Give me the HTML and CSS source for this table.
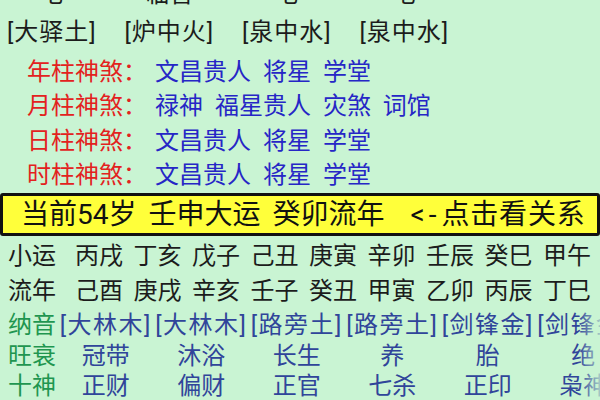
FILE: index.html
```html
<!DOCTYPE html>
<html lang="zh-CN">
<head>
<meta charset="utf-8">
<title>八字排盘</title>
<link rel="stylesheet" href="styles.css">
</head>
<body>
<div class="page">
  <div class="grid4 cut">
    <span>宅</span><span>临官</span><span>宅</span><span>宅</span>
  </div>
  <div class="grid4 nayin">
    <span>[大驿土]</span><span>[炉中火]</span><span>[泉中水]</span><span>[泉中水]</span>
  </div>
  <div class="shensha">
    <div class="ss-row"><span class="ss-label">年柱神煞：</span><span class="ss-val">文昌贵人 将星 学堂</span></div>
    <div class="ss-row"><span class="ss-label">月柱神煞：</span><span class="ss-val">禄神 福星贵人 灾煞 词馆</span></div>
    <div class="ss-row"><span class="ss-label">日柱神煞：</span><span class="ss-val">文昌贵人 将星 学堂</span></div>
    <div class="ss-row"><span class="ss-label">时柱神煞：</span><span class="ss-val">文昌贵人 将星 学堂</span></div>
  </div>
  <div class="bar">
    <span>当前54岁</span><span>壬申大运</span><span>癸卯流年</span><span class="link"><span class="arrow">&lt;-</span><span class="act">点击看关系</span></span>
  </div>
  <div class="yun">
    <div class="yun-row"><span class="yl">小运</span><span>丙戌</span><span>丁亥</span><span>戊子</span><span>己丑</span><span>庚寅</span><span>辛卯</span><span>壬辰</span><span>癸巳</span><span>甲午</span></div>
    <div class="yun-row"><span class="yl">流年</span><span>己酉</span><span>庚戌</span><span>辛亥</span><span>壬子</span><span>癸丑</span><span>甲寅</span><span>乙卯</span><span>丙辰</span><span>丁巳</span></div>
  </div>
  <div class="table">
    <div class="t-row r-nayin"><span class="gl">纳音</span><span class="cell">[大林木]</span><span class="cell">[大林木]</span><span class="cell">[路旁土]</span><span class="cell">[路旁土]</span><span class="cell">[剑锋金]</span><span class="cell">[剑锋金]</span></div>
    <div class="t-row"><span class="gl">旺衰</span><span class="cell">冠带</span><span class="cell">沐浴</span><span class="cell">长生</span><span class="cell">养</span><span class="cell">胎</span><span class="cell">绝</span></div>
    <div class="t-row"><span class="gl">十神</span><span class="cell">正财</span><span class="cell">偏财</span><span class="cell">正官</span><span class="cell">七杀</span><span class="cell">正印</span><span class="cell">枭神</span></div>
    <div class="fade"></div>
  </div>
</div>
</body>
</html>
```

FILE: styles.css
```css
html, body {
  margin: 0;
  padding: 0;
  background: #c9f4d3;
}
body {
  width: 600px;
  height: 400px;
  overflow: hidden;
  font-family: Roboto, "Noto Sans CJK SC", sans-serif;
  font-size: 24px;
  color: #1c1c1c;
}
.page {
  width: 600px;
}
.grid4 {
  display: grid;
  grid-template-columns: repeat(4, 117.5px);
  margin-left: -7px;
  height: 34px;
  line-height: 34px;
  text-align: center;
  white-space: nowrap;
}
.cut {
  margin-top: -23px;
}
.nayin {
  margin-top: 4px;
  letter-spacing: 1px;
}
.shensha {
  padding-top: 6px;
}
.ss-row {
  display: flex;
  gap: 8px;
  height: 34.3px;
  line-height: 34.3px;
  padding-left: 27px;
  white-space: nowrap;
}
.ss-label {
  color: #e3221e;
}
.ss-val {
  color: #2626c6;
  word-spacing: 6px;
}
.bar {
  margin-top: 1px;
  height: 37px;
  line-height: 37px;
  border: 3px solid #111;
  border-radius: 3px;
  background: #ffff3a;
  display: flex;
  gap: 12px;
  padding-left: 18px;
  font-size: 28px;
  color: #111;
  white-space: nowrap;
}
.bar .link {
  margin-left: 14px;
  display: flex;
}
.arrow {
  letter-spacing: 4px;
  margin-right: 1px;
}
.act {
  letter-spacing: 0.8px;
}
.yun {
  padding-top: 3px;
}
.yun-row {
  display: flex;
  gap: 10.5px;
  height: 35px;
  line-height: 35px;
  padding-left: 8px;
  white-space: nowrap;
}
.yl {
  width: 56.5px;
}
.table {
  position: relative;
  overflow: hidden;
}
.t-row {
  display: flex;
  height: 30px;
  line-height: 30px;
  padding-left: 8px;
  white-space: nowrap;
  color: #30459a;
}
.r-nayin {
  height: 32px;
  line-height: 32px;
}
.r-nayin .cell {
  letter-spacing: 1.5px;
}
.gl {
  flex: 0 0 50px;
  color: #1f9650;
}
.cell {
  flex: 0 0 95.5px;
  text-align: center;
}
.fade {
  position: absolute;
  top: 0;
  right: 0;
  bottom: 0;
  width: 22px;
  background: linear-gradient(to right, rgba(201, 244, 211, 0), rgba(201, 244, 211, 0.75));
}
```
